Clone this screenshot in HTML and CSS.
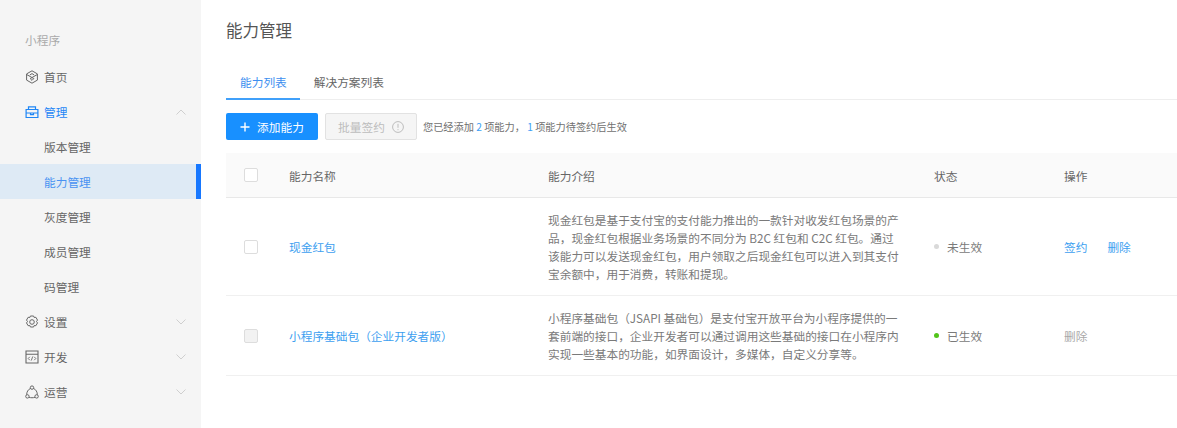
FILE: index.html
```html
<!DOCTYPE html>
<html lang="zh">
<head>
<meta charset="utf-8">
<title>能力管理</title>
<link rel="stylesheet" href="styles.css">
</head>
<body>
<div class="app">
  <aside class="sidebar">
    <div class="brand">小程序</div>
    <nav class="menu">
      <a class="item">
        <svg class="ico" viewBox="0 0 14 14" fill="none" stroke="currentColor" stroke-width="1"><path d="M7 .8 12.4 3.900V10.100L7 13.200 1.600 10.100V3.900Z"/><path d="M1.800 4.600 8.800 8.600M12.200 4.600 5.200 8.600M5.200 8.600 7 10.400 8.800 8.600M4.800 5 7 3.600 9.200 5"/></svg>
        <span>首页</span>
      </a>
      <a class="item active">
        <svg class="ico" viewBox="0 0 14 14" fill="none" stroke="currentColor" stroke-width="1.200"><path d="M1.100 4.500h11.800v8H1.100zM1.100 8h11.800M3.500 4.500V1.800h7v2.700M5.500 8v1.600h3V8"/></svg>
        <span class="grow">管理</span>
        <svg class="arrow" viewBox="0 0 10 6" fill="none" stroke="currentColor"><path d="M.5 5.500 5 1l4.500 4.500"/></svg>
      </a>
      <a class="item sub">版本管理</a>
      <a class="item sub current">能力管理</a>
      <a class="item sub">灰度管理</a>
      <a class="item sub">成员管理</a>
      <a class="item sub">码管理</a>
      <a class="item">
        <svg class="ico" viewBox="0 0 14 14" fill="none" stroke="currentColor"><path d="M5.400 1h3.200l.6 1.500 1.700-.2 1.600 2.800-1 1.400 1 1.400-1.600 2.800-1.700-.2-.6 1.500H5.400l-.6-1.500-1.700.2-1.600-2.800 1-1.400-1-1.400 1.600-2.800 1.700.2z"/><circle cx="7" cy="7" r="2.300"/></svg>
        <span class="grow">设置</span>
        <svg class="arrow" viewBox="0 0 10 6" fill="none" stroke="currentColor"><path d="M.5.500 5 5 9.500.500"/></svg>
      </a>
      <a class="item">
        <svg class="ico" viewBox="0 0 14 14" fill="none" stroke="currentColor" stroke-width="1.100"><path d="M1 1h12v12H1zM1 4.200h12"/><path stroke-width=".9" d="M4.800 6.800 3.200 8.500l1.600 1.700M9.200 6.800l1.600 1.700-1.600 1.700M7.700 6.500 6.300 10.500"/></svg>
        <span class="grow">开发</span>
        <svg class="arrow" viewBox="0 0 10 6" fill="none" stroke="currentColor"><path d="M.5.500 5 5 9.500.500"/></svg>
      </a>
      <a class="item">
        <svg class="ico" viewBox="0 0 14 14" fill="none" stroke="currentColor"><circle cx="7" cy="2.600" r="1.700"/><circle cx="2.400" cy="11.400" r="1.700"/><circle cx="11.600" cy="11.400" r="1.700"/><path d="M5.500 3.400C3 4.600 1.600 7 1.700 9.800M8.500 3.400c2.500 1.200 3.900 3.600 3.800 6.400M4 12.300c2 .6 4 .6 6 0"/></svg>
        <span class="grow">运营</span>
        <svg class="arrow" viewBox="0 0 10 6" fill="none" stroke="currentColor"><path d="M.5.500 5 5 9.500.500"/></svg>
      </a>
    </nav>
  </aside>
  <main class="main">
    <h1 class="title">能力管理</h1>
    <div class="tabs">
      <a class="tab on">能力列表</a>
      <a class="tab">解决方案列表</a>
    </div>
    <div class="toolbar">
      <button class="btn primary"><svg class="plus" viewBox="0 0 10 10" fill="none" stroke="currentColor" stroke-width="1.400"><path d="M5 .5v9M.5 5h9"/></svg>添加能力</button>
      <button class="btn disabled">批量签约<svg class="info" viewBox="0 0 12 12" fill="none" stroke="currentColor"><circle cx="6" cy="6" r="5.400"/><path d="M6 2.800v4M6 8.200v1"/></svg></button>
      <span class="hint">您已经添加 <b>2</b> 项能力， <b>1</b> 项能力待签约后生效</span>
    </div>
    <div class="table">
      <div class="row head">
        <span class="check"></span>
        <span>能力名称</span>
        <span>能力介绍</span>
        <span>状态</span>
        <span>操作</span>
      </div>
      <div class="row r1">
        <span class="check"></span>
        <a class="link">现金红包</a>
        <p class="desc">现金红包是基于支付宝的支付能力推出的一款针对收发红包场景的产品，现金红包根据业务场景的不同分为 B2C 红包和 C2C 红包。通过该能力可以发送现金红包，用户领取之后现金红包可以进入到其支付宝余额中，用于消费，转账和提现。</p>
        <span class="status"><i class="dot grey"></i>未生效</span>
        <span class="ops"><a class="link">签约</a><a class="link">删除</a></span>
      </div>
      <div class="row r2">
        <span class="check off"></span>
        <a class="link">小程序基础包（企业开发者版）</a>
        <p class="desc">小程序基础包（JSAPI 基础包）是支付宝开放平台为小程序提供的一套前端的接口，企业开发者可以通过调用这些基础的接口在小程序内实现一些基本的功能，如界面设计，多媒体，自定义分享等。</p>
        <span class="status"><i class="dot green"></i>已生效</span>
        <span class="ops"><a class="muted">删除</a></span>
      </div>
    </div>
  </main>
</div>
</body>
</html>
```
FILE: styles.css
```css
* { box-sizing: border-box; }
html, body { margin: 0; height: 100%; }
body {
  font-family: "Noto Sans CJK SC", "Open Sans", sans-serif;
  font-size: 11.7px;
  color: #666;
  background: #fff;
  overflow: hidden;
}
.app { display: flex; height: 428px; }
.sidebar { width: 201px; flex: none; background: #f5f5f5; padding-top: 22px; }
.brand { padding-left: 25px; height: 37px; line-height: 35px; color: #aaa; }
.menu { display: flex; flex-direction: column; }
.item {
  display: flex; align-items: center;
  height: 35px; padding: 0 15px 0 25px;
  color: #666;
}
.ico { width: 14px; height: 14px; margin-right: 5px; flex: none; color: #666; }
.grow { flex: 1; }
.arrow { width: 10px; height: 6px; color: #cfcfcf; }
.item.active, .item.active .ico { color: #1f86f5; }
.sub { padding-left: 44px; }
.current { background: #deeaf5; color: #4a93f2; border-right: 5px solid #1677ff; }
.main { flex: 1; min-width: 0; padding: 0 0 0 25px; }
.title { margin: 0; padding-top: 17px; height: 67px; font-size: 16.5px; font-weight: 400; line-height: 26px; color: #555; }
.tabs { display: flex; height: 33px; border-bottom: 1px solid #eee; }
.tab { height: 33px; padding: 0 13px 0 14px; line-height: 30px; }
.tab.on { color: #3d8ff0; border-bottom: 2px solid #40a0fa; }
.toolbar { display: flex; align-items: center; margin-top: 13px; height: 27px; }
.btn {
  width: 92px; height: 27px; padding: 0; border-radius: 2px;
  display: inline-flex; align-items: center; justify-content: center;
  font: inherit; border: 1px solid transparent;
}
.primary { background: #1890ff; color: #fff; }
.plus { width: 10px; height: 10px; margin-right: 7px; }
.disabled { margin-left: 7px; background: #f5f5f5; border-color: #e2e2e2; color: #bdbdbd; }
.info { width: 12px; height: 12px; margin-left: 7px; }
.hint { margin-left: 6px; font-size: 10.2px; color: #707070; }
.hint b { font-weight: 400; color: #3da0f5; }
.table { margin-top: 13px; }
.row {
  display: grid;
  grid-template-columns: 63px 259px 386px 130px 1fr;
  align-items: center;
  border-bottom: 1px solid #f0f0f0;
}
.row > :first-child { margin-left: 18px; }
.head { height: 45px; background: #fafafa; border-bottom-color: #e8e8e8; }
.r1 { height: 98px; }
.r2 { height: 80px; }
.check { width: 14px; height: 14px; border: 1px solid #ddd; border-radius: 2px; background: #fff; }
.check.off { background: #f2f2f2; }
.link { color: #3da0f0; }
.muted { color: #a8a8a8; }
.desc { margin: 0; width: 352px; line-height: 18px; color: #7a7a7a; }
.status { display: flex; align-items: center; color: #7a7a7a; }
.dot { width: 5px; height: 5px; border-radius: 50%; margin-right: 8px; }
.grey { background: #d9d9d9; }
.green { background: #52c41a; }
.ops { display: flex; gap: 20px; }
```
